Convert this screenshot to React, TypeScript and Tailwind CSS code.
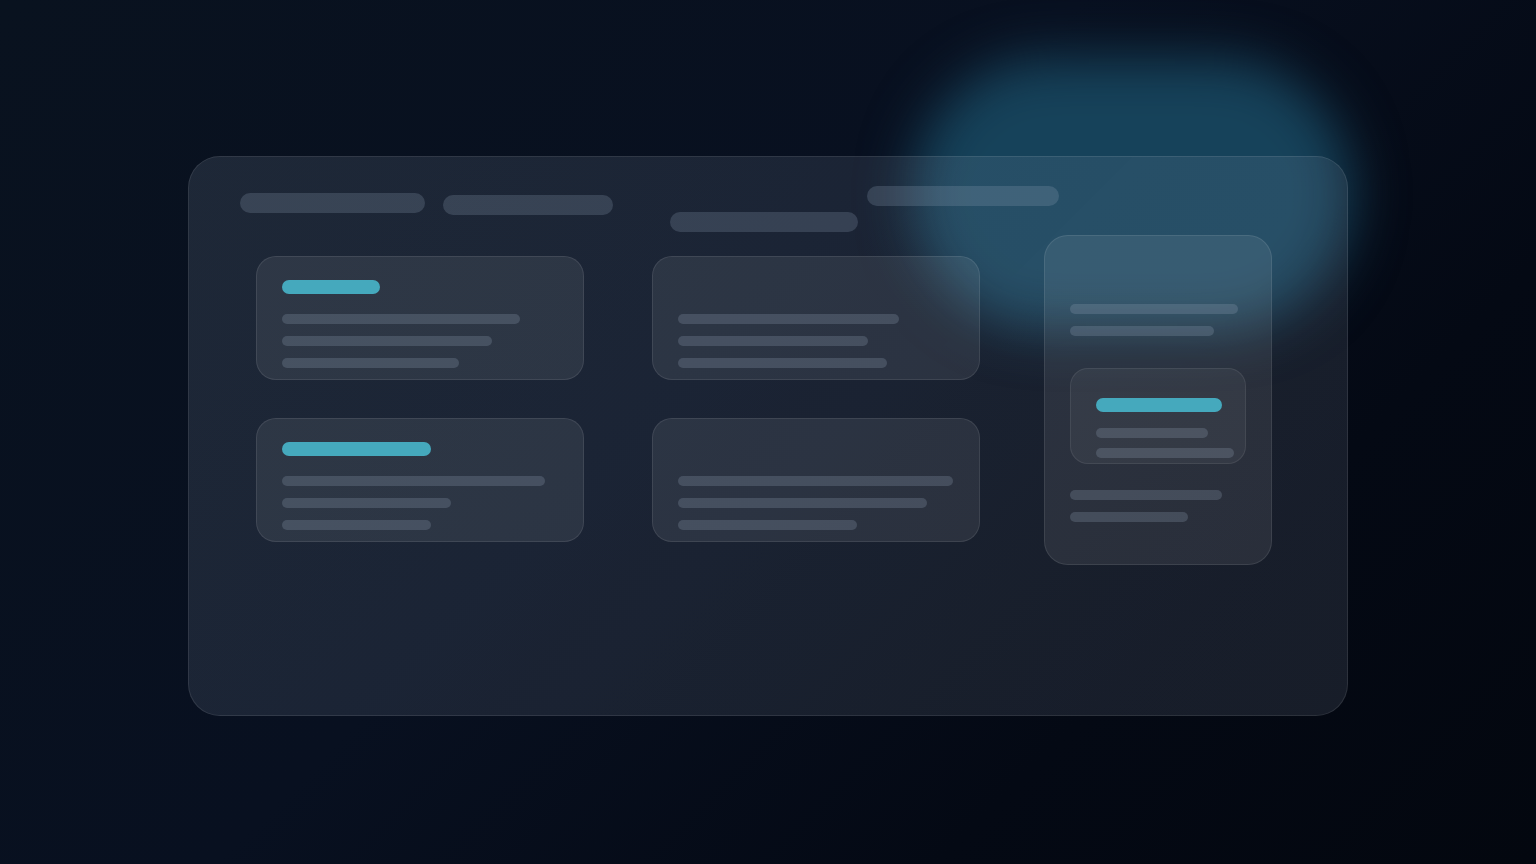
import React from "react";

const Line = ({ w }: { w: number }) => (
  <div className="h-[10px] rounded-full bg-[rgba(148,163,184,0.25)]" style={{ width: w }} />
);

const Accent = ({ w }: { w: number }) => (
  <div className="h-[14px] rounded-full bg-[#45a9bd]" style={{ width: w }} />
);

function Card({ accent, lines }: { accent?: number; lines: number[] }) {
  return (
    <div className="h-[124px] w-[328px] rounded-[20px] border border-white/[0.09] bg-white/[0.08] pl-[25px] pt-[23px]">
      <div className="h-[14px]">{accent ? <Accent w={accent} /> : null}</div>
      <div className="mt-[20px] flex flex-col gap-[12px]">
        {lines.map((w, i) => (
          <Line key={i} w={w} />
        ))}
      </div>
    </div>
  );
}

export default function App() {
  return (
    <div className="relative flex h-[864px] w-full justify-center overflow-hidden bg-[linear-gradient(135deg,#09121f_0%,#081020_45%,#040914_75%,#03070f_100%)] pt-[156px]">
      {/* glow */}
      <div className="absolute left-[912px] top-[58px] z-0 h-[272px] w-[440px] rounded-full bg-[#16425a] blur-[26px]" />
      {/* panel */}
      <div className="relative z-10 h-[560px] w-[1160px] rounded-[32px] border border-white/[0.09] bg-[linear-gradient(135deg,rgba(148,163,184,0.155),rgba(148,163,184,0.135)_60%,rgba(148,163,184,0.14))]">
        {/* top bars */}
        <div className="flex h-[76px] items-start pl-[51px] pt-[29px]">
          <div className="mt-[7px] h-[20px] w-[185px] rounded-full bg-[rgba(148,163,184,0.23)]" />
          <div className="ml-[18px] mt-[9px] h-[20px] w-[170px] rounded-full bg-[rgba(148,163,184,0.23)]" />
          <div className="ml-[57px] mt-[26px] h-[20px] w-[188px] rounded-full bg-[rgba(148,163,184,0.23)]" />
          <div className="ml-[9px] h-[20px] w-[192px] rounded-full bg-[rgba(148,163,184,0.23)]" />
        </div>
        {/* body */}
        <div className="flex items-start pl-[67px] pt-[2px]">
          <div className="mt-[21px] grid grid-cols-2 gap-x-[68px] gap-y-[38px]">
            <Card accent={98} lines={[238, 210, 177]} />
            <Card lines={[221, 190, 209]} />
            <Card accent={149} lines={[263, 169, 149]} />
            <Card lines={[275, 249, 179]} />
          </div>
          <div className="ml-[64px] h-[330px] w-[228px] rounded-[24px] border border-white/[0.09] bg-white/[0.08] pl-[25px] pt-[68px]">
            <div className="flex flex-col gap-[12px]">
              <Line w={168} />
              <Line w={144} />
            </div>
            <div className="mt-[32px] h-[96px] w-[176px] rounded-[18px] border border-white/[0.08] bg-white/[0.05] pl-[25px] pt-[29px]">
              <Accent w={126} />
              <div className="mt-[16px] flex flex-col gap-[10px]">
                <Line w={112} />
                <Line w={138} />
              </div>
            </div>
            <div className="mt-[26px] flex flex-col gap-[12px]">
              <Line w={152} />
              <Line w={118} />
            </div>
          </div>
        </div>
      </div>
    </div>
  );
}
